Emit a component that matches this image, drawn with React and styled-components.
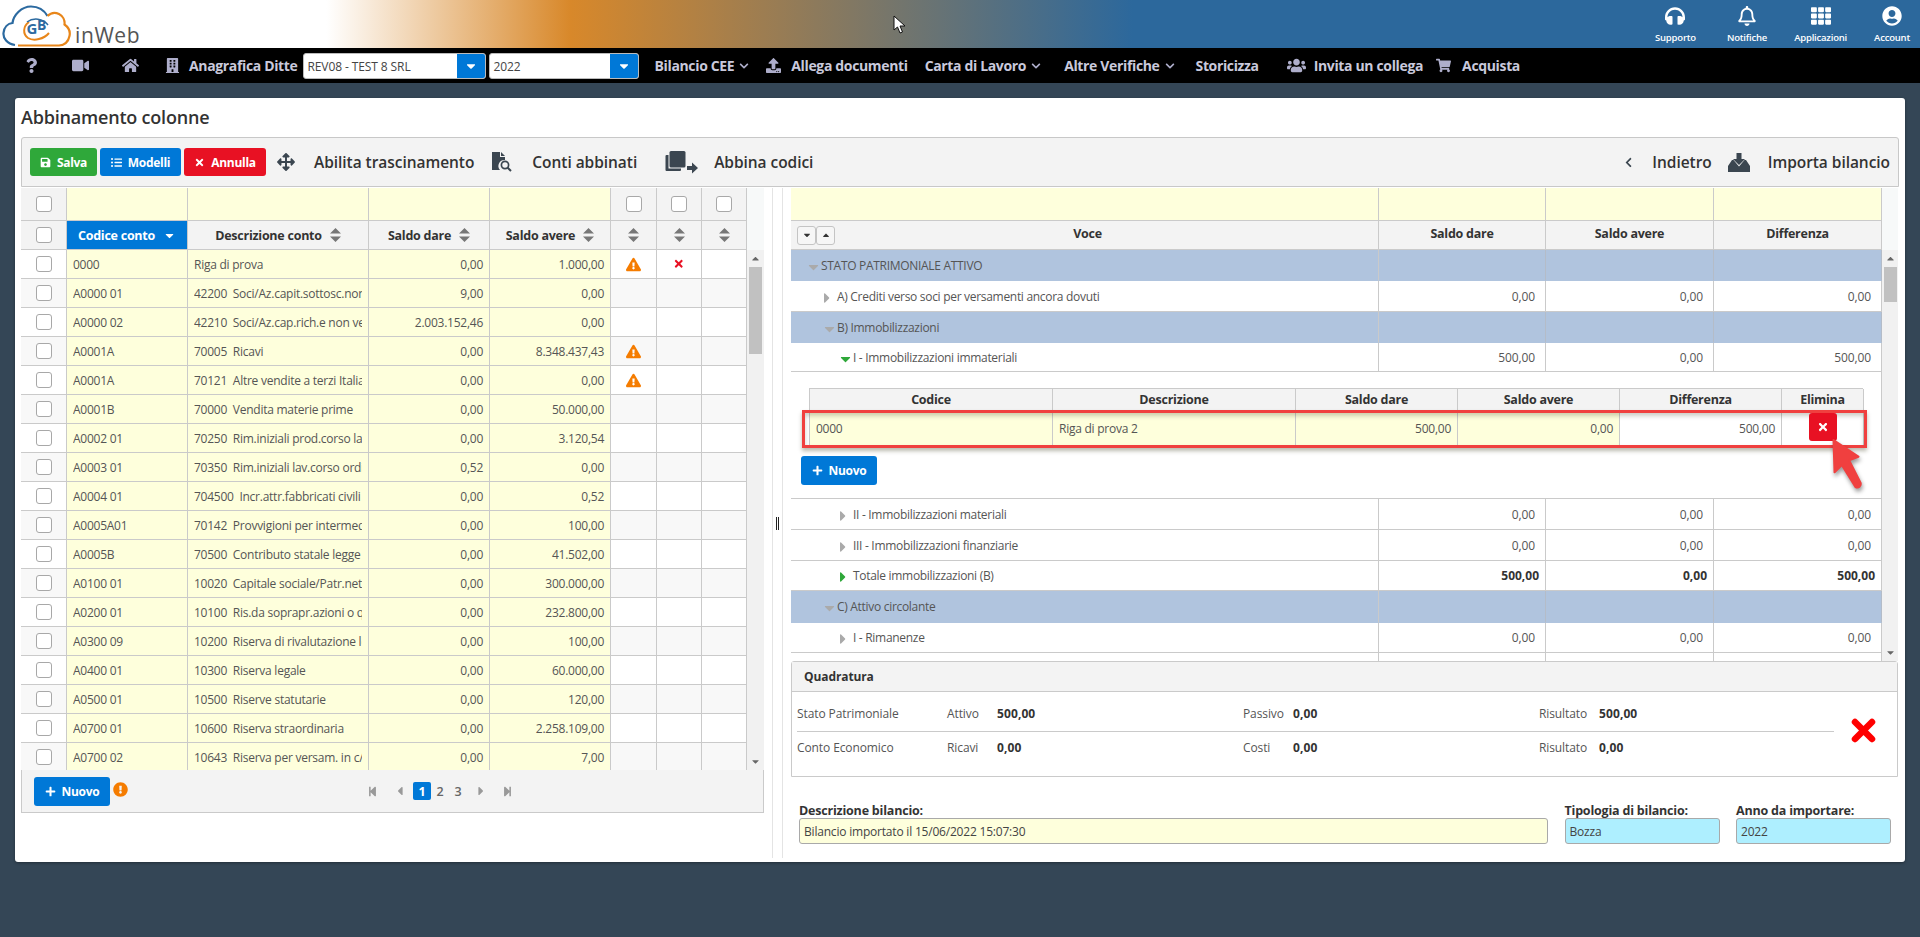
import React from "react";
import styled, { createGlobalStyle } from "styled-components";
import {
  FaHeadphones, FaRegBell, FaTh, FaUserCircle, FaQuestion, FaVideo, FaHome, FaBuilding, FaChevronDown,
  FaUpload, FaUsers, FaShoppingCart, FaSave, FaListUl, FaTimes, FaArrowsAlt, FaChevronLeft, FaPlus,
  FaExclamationTriangle, FaStepBackward, FaStepForward, FaCaretLeft, FaCaretRight, FaCaretDown, FaCaretUp, FaExclamationCircle,
} from "react-icons/fa";

const Global = createGlobalStyle`
  html, body { margin: 0; padding: 0; background: #344656; }
  body { font-family: "Open Sans", "Noto Sans", sans-serif; font-size: 12px; color: #444; }
  * { box-sizing: border-box; }
`;

const Page = styled.div`width:1920px;height:937px;overflow:hidden;display:flex;flex-direction:column;position:relative;background:#344656;`;
const TopBar = styled.header`
  height:48px;flex:none;display:flex;align-items:stretch;justify-content:space-between;
  background:linear-gradient(90deg,#fff 17%,#d8882a 29.7%,#2c689c 59%);
`;
const LogoWrap = styled.div`display:flex;align-items:flex-end;padding:3px 0 0 2px;`;
const InWeb = styled.span`font-size:21px;line-height:24px;color:#555;margin:0 0 0 3px;letter-spacing:.6px;font-family:"Open Sans",sans-serif;padding-bottom:1px;`;
const HeaderActions = styled.div`display:flex;gap:27px;padding-right:10px;`;
const HeaderAction = styled.div`display:flex;flex-direction:column;align-items:center;justify-content:flex-start;color:#fff;padding-top:6px;margin-left:${p => p.$ml ?? 0}px;
  svg{font-size:20px;display:block;height:20px;}
`;
const HeaderLabel = styled.span`font-size:9.5px;font-weight:600;line-height:12px;margin-top:6px;color:#fff;letter-spacing:-.2px;`;

const NavBar = styled.nav`height:35px;flex:none;background:#000;display:flex;align-items:center;padding-left:24px;color:#c9c9dc;`;
const NavItem = styled.div`
  display:flex;align-items:center;gap:${p => p.$gap ?? 0}px;margin-left:${p => p.$ml ?? 0}px;font-size:14px;font-weight:700;white-space:nowrap;letter-spacing:-.35px;
  svg{color:#aeaecb;flex:none;}
`;
const SelectBox = styled.div`width:${p => p.$w}px;height:26px;margin-left:${p => p.$ml}px;display:flex;background:#fff;border:1px solid #bbb;border-radius:3px;overflow:hidden;`;
const SelectText = styled.div`flex:1;font-size:12px;line-height:25px;padding-left:4px;color:#444;white-space:nowrap;overflow:hidden;letter-spacing:-.1px;`;
const SelectBtn = styled.div`width:28px;background:#0078d7;color:#fff;display:flex;align-items:center;justify-content:center;font-size:14px;`;

const Main = styled.main`flex:1;padding:15px 15px 0;`;
const Card = styled.section`height:764px;background:#fff;border-radius:3px;padding:0 6px;box-shadow:0 1px 3px rgba(0,0,0,.35);display:flex;flex-direction:column;`;
const Title = styled.h1`height:39px;margin:0;font-size:18px;font-weight:600;line-height:38px;color:#333;letter-spacing:-.2px;flex:none;`;
const Toolbar = styled.div`height:50px;flex:none;background:#f3f3f3;border:1px solid #c8c8c8;border-radius:3px 3px 0 0;display:flex;align-items:center;padding-left:8px;padding-right:8px;`;
const ColorBtn = styled.button`
  height:${p => p.$h ?? 28}px;width:${p => p.$w}px;margin-left:${p => p.$ml ?? 0}px;border:0;border-radius:3px;background:${p => p.$bg};color:#fff;
  font:700 12px "Open Sans",sans-serif;letter-spacing:-.3px;display:inline-flex;align-items:center;justify-content:center;gap:6px;padding:0;flex:none;
`;
const ToolLink = styled.div`display:flex;align-items:center;gap:${p => p.$gap}px;margin-left:${p => p.$ml}px;font-size:15.5px;font-weight:600;color:#333;letter-spacing:-.05px;white-space:nowrap;svg{flex:none;}`;
const Spacer = styled.div`flex:1;`;

const Panes = styled.div`flex:none;height:670px;display:flex;margin-top:1px;`;
const LeftPane = styled.div`width:751px;flex:none;`;
const Splitter = styled.div`width:11px;flex:none;border-left:1px solid #e4e4e4;border-right:1px solid #e4e4e4;display:flex;align-items:center;justify-content:center;gap:1px;`;
const SplitLine = styled.span`width:1px;height:13px;background:#222;`;
const RightPane = styled.div`flex:1;padding-left:8px;min-width:0;`;

const LeftCols = "46px 121px 181px 121px 121px 46px 45px 45px";
const TableShell = styled.div`display:flex;width:${p => p.$w}px;`;
const TableCol = styled.div`width:${p => p.$w}px;flex:none;`;
const LeftRow = styled.div`display:grid;grid-template-columns:${LeftCols};height:${p => p.$h ?? 29}px;`;
const Cell = styled.div`
  border-right:1px solid #cacaca;border-bottom:1px solid #cacaca;background:${p => p.$bg ?? "#fff"};display:flex;align-items:center;
  justify-content:${p => p.$j ?? "flex-start"};padding:0 6px;font-size:12px;color:#555;min-width:0;letter-spacing:-.25px;
`;
const HeadCell = styled(Cell)`background:${p => p.$bg ?? "#f3f3f3"};justify-content:center;font-weight:700;color:${p => p.$c ?? "#333"};gap:8px;font-size:12.5px;white-space:nowrap;`;
const RightHead = styled(HeadCell)`padding-bottom:3px;`;
const Clip = styled.div`overflow:hidden;white-space:pre;width:100%;`;
const Check = styled.input.attrs({ type: "checkbox", readOnly: true })`appearance:none;margin:0;width:16px;height:16px;border:1px solid #a8a8a8;border-radius:3px;background:#fff;`;
const Warn = styled(FaExclamationTriangle)`color:#f57c00;font-size:15px;`;
const SmallX = styled(FaTimes)`color:#e81123;font-size:11.5px;`;

const ScrollTrack = styled.div`width:${p => p.$w ?? 17}px;flex:none;display:flex;flex-direction:column;align-items:center;`;
const ScrollHead = styled.div`height:62px;width:100%;background:#f7f9f9;flex:none;`;
const ScrollBody = styled.div`flex:1;width:100%;background:#f1f1f1;display:flex;flex-direction:column;align-items:center;min-height:0;`;
const ScrollArrow = styled.div`height:17px;flex:none;color:#666;font-size:11px;display:flex;align-items:center;justify-content:center;`;
const ScrollThumb = styled.div`width:13px;height:${p => p.$h}px;background:#c1c1c1;flex:none;`;
const RowsClip = styled.div`height:${p => p.$h}px;overflow:hidden;`;

const Footer = styled.div`width:743px;height:43px;background:#f3f3f3;border:1px solid #cacaca;border-top:0;display:flex;align-items:center;padding-left:12px;`;
const InfoDot = styled(FaExclamationCircle)`color:#f57c00;font-size:15px;margin-left:3px;margin-top:-3px;`;
const Pager = styled.div`display:flex;align-items:center;margin-left:231px;color:#999;font-size:14px;`;
const PageIcon = styled.span`width:${p => p.$w ?? 27}px;display:flex;justify-content:center;font-size:${p => p.$s ?? 11}px;`;
const PageNum = styled.span`width:18px;height:18px;border-radius:2px;display:flex;align-items:center;justify-content:center;font-weight:${p => p.$on ? 700 : 600};font-size:12.5px;background:${p => p.$on ? "#0078d7" : "transparent"};color:${p => p.$on ? "#fff" : "#666"};`;

const RightCols = "588px 167px 168px 168px";
const RightRow = styled.div`display:grid;grid-template-columns:${RightCols};height:${p => p.$h}px;`;
const TreeCell = styled(Cell)`background:${p => p.$bg ?? "#fff"};padding:0 0 0 ${p => p.$level * 16 + 15}px;letter-spacing:-.3px;border-bottom-color:${p => p.$blue ? "#b0c4de" : "#cacaca"};`;
const NumCell = styled(Cell)`justify-content:flex-end;padding-right:${p => p.$bold ? 6 : 10}px;font-weight:${p => p.$bold ? 700 : 400};color:${p => p.$bold ? "#333" : "#555"};background:${p => p.$bg ?? "#fff"};letter-spacing:${p => p.$bold ? 0 : -.1}px;border-bottom-color:${p => p.$blue ? "#b0c4de" : "#cacaca"};border-right-color:${p => p.$blue ? "#b4bcc8" : "#cacaca"};`;
const Arrow = styled.span`width:15px;flex:none;display:flex;justify-content:${p => p.$open ? "flex-start" : "center"};padding-right:${p => p.$open ? 0 : 5}px;color:${p => p.$c ?? "#aaa"};font-size:16px;margin-top:3px;`;
const VoceHead = styled(RightHead)`justify-content:space-between;padding:0 0 0 6px;`;
const VoceLabel = styled.span`flex:1;text-align:center;padding:0 46px 3px 0;`;
const ToggleGroup = styled.div`display:flex;`;
const Toggle = styled.span`width:19px;height:19px;background:#f6f6f6;border:1px solid #c4c4c4;border-radius:3px;color:#333;font-size:10px;display:flex;align-items:center;justify-content:center;`;

const DetailArea = styled.div`height:127px;border-bottom:1px solid #cacaca;border-right:1px solid #cacaca;width:1091px;padding:16px 0 0 10px;`;
const DetailTable = styled.div`margin-left:8px;width:1054px;position:relative;`;
const DetailCols = "243px 243px 162px 162px 162px 82px";
const DetailHead = styled.div`display:grid;grid-template-columns:${DetailCols};height:23px;border-top:1px solid #cacaca;border-left:1px solid #cacaca;`;
const DetailRow = styled.div`display:grid;grid-template-columns:${DetailCols};height:36px;border-left:1px solid #cacaca;`;
const Annotation = styled.div`position:absolute;left:-7px;right:-4px;top:22px;height:38px;border:3px solid #f0403f;box-shadow:0 3px 4px rgba(60,60,30,.35),inset 0 3px 4px rgba(60,60,30,.25);pointer-events:none;`;
const DelBtn = styled.button`width:28px;height:28px;border:0;border-radius:3px;background:#e81123;color:#fff;display:flex;align-items:center;justify-content:center;font-size:12px;padding:0;margin-top:-3px;position:relative;z-index:1;`;
const BigNuovo = styled(ColorBtn)`margin-top:9px;`;
const PointerWrap = styled.div`position:absolute;left:1827px;top:437px;z-index:3;filter:drop-shadow(1px 3px 2px rgba(0,0,0,.4));`;
const CursorWrap = styled.div`position:absolute;left:893px;top:15px;z-index:3;`;

const Quad = styled.div`height:116px;width:1107px;border:1px solid #cacaca;border-radius:3px 3px 0 0;background:#fff;`;
const QuadHead = styled.div`height:30px;background:#f3f3f3;border-bottom:1px solid #cacaca;font-weight:700;font-size:12px;color:#333;display:flex;align-items:center;padding-left:12px;letter-spacing:-.1px;`;
const QuadBody = styled.div`display:flex;`;
const QuadRows = styled.div`width:1042px;padding:3px 0 0 5px;flex:none;`;
const QuadRow = styled.div`display:grid;grid-template-columns:150px 50px 246px 50px 246px 60px 1fr;align-items:center;height:${p => p.$h}px;border-bottom:${p => p.$line ? "1px solid #cacaca" : "0"};font-size:12px;color:#555;letter-spacing:-.1px;`;
const QuadVal = styled.b`font-weight:700;color:#333;letter-spacing:.1px;`;
const QuadMark = styled.div`flex:1;display:flex;align-items:center;justify-content:center;padding:6px 5px 0 0;`;

const Form = styled.div`display:grid;grid-template-columns:749px 155px 155px;column-gap:16.5px;padding:26px 0 0 8px;`;
const FieldWrap = styled.label`display:flex;flex-direction:column;font-size:12.5px;font-weight:700;color:#333;line-height:15px;letter-spacing:-.2px;`;
const Field = styled.input.attrs({ readOnly: true })`height:26px;margin-top:0;border:1px solid #a9a9a9;border-radius:3px;padding:0 4px;font:400 12px "Open Sans",sans-serif;color:#444;background:${p => p.$bg};letter-spacing:-.2px;width:100%;`;

const yellow = "#feffdc";
const blue = "#b0c4de";
const rows = [
  ["0000", "Riga di prova", "0,00", "1.000,00", 1, 1],
  ["A0000 01", "42200  Soci/Az.capit.sottosc.non richiamato", "9,00", "0,00"],
  ["A0000 02", "42210  Soci/Az.cap.rich.e non versato", "2.003.152,46", "0,00"],
  ["A0001A", "70005  Ricavi", "0,00", "8.348.437,43", 1],
  ["A0001A", "70121  Altre vendite a terzi Italia", "0,00", "0,00", 1],
  ["A0001B", "70000  Vendita materie prime", "0,00", "50.000,00"],
  ["A0002 01", "70250  Rim.iniziali prod.corso lav", "0,00", "3.120,54"],
  ["A0003 01", "70350  Rim.iniziali lav.corso ordinazione", "0,52", "0,00"],
  ["A0004 01", "704500  Incr.attr.fabbricati civili", "0,00", "0,52"],
  ["A0005A01", "70142  Provvigioni per intermediazione", "0,00", "100,00"],
  ["A0005B", "70500  Contributo statale legge 123", "0,00", "41.502,00"],
  ["A0100 01", "10020  Capitale sociale/Patr.netto", "0,00", "300.000,00"],
  ["A0200 01", "10100  Ris.da soprapr.azioni o quote", "0,00", "232.800,00"],
  ["A0300 09", "10200  Riserva di rivalutazione legge", "0,00", "100,00"],
  ["A0400 01", "10300  Riserva legale", "0,00", "60.000,00"],
  ["A0500 01", "10500  Riserve statutarie", "0,00", "120,00"],
  ["A0700 01", "10600  Riserva straordinaria", "0,00", "2.258.109,00"],
  ["A0700 02", "10643  Riserva per versam. in c/capitale", "0,00", "7,00"],
];

const Logo = () => (
  <svg width="70" height="44" viewBox="0 0 70 44" fill="none">
    <path d="M13 41 C5 40 1 34 1.500 29 C2 23 6 19.500 10.500 19 C11.500 11 19.500 2.500 29 2.500 C36 2.500 42 6 45.500 12" stroke="#2c6aa0" strokeWidth="2.200" />
    <path d="M45.500 12 C48.500 9 53 8 57 10 C61 12 63 16.500 62.500 20.500 C66 23 68.500 27.500 67.500 32 C66.500 37 63.500 41 57 41.500 L16 41.500" stroke="#e8861a" strokeWidth="2.200" />
    <path d="M27 18 C21 22 20.500 30 26 34 C32 37.500 42 35 47 29" stroke="#e8861a" strokeWidth="2" />
    <path d="M25 18 C31 13.500 41 14 46 21" stroke="#2c6aa0" strokeWidth="1.500" />
    <text x="24.500" y="30" fontSize="15" fontWeight="700" fill="#2c6aa0" fontFamily="Open Sans, sans-serif">G</text>
    <text x="35" y="26" fontSize="14" fontWeight="700" fill="#2c6aa0" fontFamily="Open Sans, sans-serif">B</text>
  </svg>
);
const SortIcon = ({ color = "#777" }) => (
  <svg width="11" height="14" viewBox="0 0 11 14"><path d="M5.500 0 L11 5.500 H0 Z M0 8.500 H11 L5.500 14 Z" fill={color} /></svg>
);
const FileSearch = () => (
  <svg width="24" height="20" viewBox="0 0 24 20">
    <path d="M1 0 H9 V5 H14 V8 A6 6 0 0 0 9 18 H1 Z M10 0 L14 4 H10 Z" fill="#3b4650" />
    <circle cx="14" cy="13" r="3.600" fill="none" stroke="#3b4650" strokeWidth="1.700" />
    <path d="M16.500 15.500 L20 19" stroke="#3b4650" strokeWidth="2" />
  </svg>
);
const CopyArrow = () => (
  <svg width="33" height="23" viewBox="0 0 33 23">
    <path d="M6 0 H19 A1.500 1.500 0 0 1 20.500 1.500 V15 A1.500 1.500 0 0 1 19 16.500 H6 A1.500 1.500 0 0 1 4.500 15 V1.500 A1.500 1.500 0 0 1 6 0 Z" fill="#3b4650" />
    <path d="M1.500 4 H3.500 V17.500 H16 V19 A1 1 0 0 1 15 20 H1.500 A1 1 0 0 1 .5 19 V5 A1 1 0 0 1 1.500 4 Z" fill="#3b4650" />
    <path d="M22 15 H27 V11.500 L33 17 L27 22.500 V19 H22 Z" fill="#3b4650" />
  </svg>
);
const InboxDown = () => (
  <svg width="22" height="19" viewBox="0 0 22 19">
    <path d="M8.500 0 H13.500 V6 H17 L11 12 L5 6 H8.500 Z" fill="#3b4650" />
    <path d="M4 7 H5.500 L11 13.500 L16.500 7 H18 L22 13 V19 H0 V13 Z" fill="#3b4650" />
  </svg>
);
const RedPointer = () => (
  <svg width="40" height="56" viewBox="0 0 38 54">
    <path d="M6 3 L30 19 L21 22.500 L32 44 C33 47 30 50 27 48 L14 27 L7 34 Z" fill="#f0403f" stroke="#f0403f" strokeWidth="2" strokeLinejoin="round" />
  </svg>
);
const MouseCursor = () => (
  <svg width="13" height="19" viewBox="0 0 13 19"><path d="M1 1 V15 L4.500 12 L7 18 L9.500 17 L7 11 H12 Z" fill="#fff" stroke="#111" strokeWidth="1" /></svg>
);
const BigX = () => (
  <svg width="25" height="25" viewBox="0 0 25 25"><path d="M4 4 L21 21 M21 4 L4 21" stroke="#f00" strokeWidth="6.500" strokeLinecap="round" /></svg>
);

const TreeRow = ({ h, level, label, vals, isBlue, arrow, bold, arrowColor }) => {
  const bg = isBlue ? blue : "#fff";
  return (
    <RightRow $h={h}>
      <TreeCell $level={level} $bg={bg} $blue={isBlue}>
        <Arrow $open={arrow === "down"} $c={arrowColor}>{arrow === "down" ? <FaCaretDown /> : <FaCaretRight />}</Arrow>
        {label}
      </TreeCell>
      {(vals || ["", "", ""]).map((v, i) => <NumCell key={i} $bg={bg} $blue={isBlue} $bold={bold}>{v}</NumCell>)}
    </RightRow>
  );
};
const zero = ["0,00", "0,00", "0,00"];

export default function App() {
  return (
    <Page>
      <Global />
      <TopBar>
        <LogoWrap><Logo /><InWeb>inWeb</InWeb></LogoWrap>
        <HeaderActions>
          <HeaderAction><FaHeadphones /><HeaderLabel>Supporto</HeaderLabel></HeaderAction>
          <HeaderAction $ml={4}><FaRegBell /><HeaderLabel>Notifiche</HeaderLabel></HeaderAction>
          <HeaderAction><FaTh /><HeaderLabel>Applicazioni</HeaderLabel></HeaderAction>
          <HeaderAction><FaUserCircle /><HeaderLabel>Account</HeaderLabel></HeaderAction>
        </HeaderActions>
      </TopBar>
      <CursorWrap><MouseCursor /></CursorWrap>
      <NavBar>
        <NavItem><FaQuestion size={15} /></NavItem>
        <NavItem $ml={33}><FaVideo size={17} /></NavItem>
        <NavItem $ml={33}><FaHome size={17} /></NavItem>
        <NavItem $ml={26} $gap={9}><FaBuilding size={15} />Anagrafica Ditte</NavItem>
        <SelectBox $w={183} $ml={5}><SelectText>REV08 - TEST 8 SRL</SelectText><SelectBtn><FaCaretDown /></SelectBtn></SelectBox>
        <SelectBox $w={150} $ml={3}><SelectText>2022</SelectText><SelectBtn><FaCaretDown /></SelectBtn></SelectBox>
        <NavItem $ml={16} $gap={5}>Bilancio CEE<FaChevronDown size={10} /></NavItem>
        <NavItem $ml={17} $gap={10}><FaUpload size={15} />Allega documenti</NavItem>
        <NavItem $ml={17} $gap={5}>Carta di Lavoro<FaChevronDown size={10} /></NavItem>
        <NavItem $ml={23} $gap={5}>Altre Verifiche<FaChevronDown size={10} /></NavItem>
        <NavItem $ml={21}>Storicizza</NavItem>
        <NavItem $ml={28} $gap={8}><FaUsers size={19} />Invita un collega</NavItem>
        <NavItem $ml={13} $gap={11}><FaShoppingCart size={15} />Acquista</NavItem>
      </NavBar>
      <PointerWrap><RedPointer /></PointerWrap>
      <Main>
        <Card>
          <Title>Abbinamento colonne</Title>
          <Toolbar>
            <ColorBtn $bg="#2fa83a" $w={67}><FaSave size={11} />Salva</ColorBtn>
            <ColorBtn $bg="#0078d7" $w={81} $ml={3}><FaListUl size={11} />Modelli</ColorBtn>
            <ColorBtn $bg="#e81123" $w={82} $ml={3}><FaTimes size={11} />Annulla</ColorBtn>
            <ToolLink $ml={11} $gap={19}><FaArrowsAlt size={18} color="#3b4650" />Abilita trascinamento</ToolLink>
            <ToolLink $ml={17} $gap={17}><FileSearch />Conti abbinati</ToolLink>
            <ToolLink $ml={28} $gap={16}><CopyArrow />Abbina codici</ToolLink>
            <Spacer />
            <ToolLink $ml={0} $gap={18}><FaChevronLeft size={11} color="#3b4650" />Indietro</ToolLink>
            <ToolLink $ml={16} $gap={18}><InboxDown />Importa bilancio</ToolLink>
          </Toolbar>
          <Panes>
            <LeftPane>
              <TableShell $w={743}>
                <TableCol $w={726}>
                  <LeftRow $h={33}>
                    <HeadCell><Check /></HeadCell>
                    <Cell $bg={yellow} /><Cell $bg={yellow} /><Cell $bg={yellow} /><Cell $bg={yellow} />
                    <HeadCell><Check /></HeadCell><HeadCell><Check /></HeadCell><HeadCell><Check /></HeadCell>
                  </LeftRow>
                  <LeftRow>
                    <HeadCell><Check /></HeadCell>
                    <HeadCell $bg="#0078d7" $c="#fff">Codice conto<FaCaretDown size={13} color="#fff" /></HeadCell>
                    <HeadCell>Descrizione conto<SortIcon /></HeadCell>
                    <HeadCell>Saldo dare<SortIcon /></HeadCell>
                    <HeadCell>Saldo avere<SortIcon /></HeadCell>
                    <HeadCell><SortIcon /></HeadCell><HeadCell><SortIcon /></HeadCell><HeadCell><SortIcon /></HeadCell>
                  </LeftRow>
                  <RowsClip $h={520}>
                    {rows.map((r, i) => {
                      const plain = i % 2 === 0 ? "#fff" : "#f8f8f8";
                      return (
                        <LeftRow key={i}>
                          <Cell $bg={plain} $j="center"><Check /></Cell>
                          <Cell $bg={yellow}><Clip>{r[0]}</Clip></Cell>
                          <Cell $bg={yellow}><Clip>{r[1]}</Clip></Cell>
                          <Cell $bg={yellow} $j="flex-end">{r[2]}</Cell>
                          <Cell $bg={yellow} $j="flex-end">{r[3]}</Cell>
                          <Cell $bg={plain} $j="center">{r[4] ? <Warn /> : null}</Cell>
                          <Cell $bg={plain} $j="center">{r[5] ? <SmallX /> : null}</Cell>
                          <Cell $bg={plain} />
                        </LeftRow>
                      );
                    })}
                  </RowsClip>
                </TableCol>
                <ScrollTrack>
                  <ScrollHead />
                  <ScrollBody>
                    <ScrollArrow><FaCaretUp /></ScrollArrow>
                    <ScrollThumb $h={87} />
                    <Spacer />
                    <ScrollArrow><FaCaretDown /></ScrollArrow>
                  </ScrollBody>
                </ScrollTrack>
              </TableShell>
              <Footer>
                <ColorBtn $bg="#0078d7" $w={76} $h={29}><FaPlus size={11} />Nuovo</ColorBtn>
                <InfoDot />
                <Pager>
                  <PageIcon><FaStepBackward /></PageIcon>
                  <PageIcon $s={14}><FaCaretLeft /></PageIcon>
                  <PageNum $on>1</PageNum><PageNum>2</PageNum><PageNum>3</PageNum>
                  <PageIcon $s={14}><FaCaretRight /></PageIcon>
                  <PageIcon><FaStepForward /></PageIcon>
                </Pager>
              </Footer>
            </LeftPane>
            <Splitter><SplitLine /><SplitLine /></Splitter>
            <RightPane>
              <TableShell $w={1107}>
                <TableCol $w={1091}>
                  <RightRow $h={33}><Cell $bg={yellow} /><Cell $bg={yellow} /><Cell $bg={yellow} /><Cell $bg={yellow} /></RightRow>
                  <RightRow $h={29}>
                    <VoceHead>
                      <ToggleGroup><Toggle><FaCaretDown /></Toggle><Toggle><FaCaretUp /></Toggle></ToggleGroup>
                      <VoceLabel>Voce</VoceLabel>
                    </VoceHead>
                    <RightHead>Saldo dare</RightHead><RightHead>Saldo avere</RightHead><RightHead>Differenza</RightHead>
                  </RightRow>
                  <RowsClip $h={411}>
                    <TreeRow h={31} level={0} label="STATO PATRIMONIALE ATTIVO" isBlue arrow="down" />
                    <TreeRow h={31} level={1} label="A) Crediti verso soci per versamenti ancora dovuti" arrow="right" vals={zero} />
                    <TreeRow h={31} level={1} label="B) Immobilizzazioni" isBlue arrow="down" />
                    <TreeRow h={29} level={2} label="I - Immobilizzazioni immateriali" arrow="down" arrowColor="#2fa83a" vals={["500,00", "0,00", "500,00"]} />
                    <DetailArea>
                      <DetailTable>
                        <DetailHead>
                          <HeadCell>Codice</HeadCell><HeadCell>Descrizione</HeadCell><HeadCell>Saldo dare</HeadCell>
                          <HeadCell>Saldo avere</HeadCell><HeadCell>Differenza</HeadCell><HeadCell>Elimina</HeadCell>
                        </DetailHead>
                        <DetailRow>
                          <Cell $bg={yellow}>0000</Cell><Cell $bg={yellow}>Riga di prova 2</Cell>
                          <Cell $bg={yellow} $j="flex-end">500,00</Cell><Cell $bg={yellow} $j="flex-end">0,00</Cell>
                          <Cell $j="flex-end">500,00</Cell>
                          <Cell $j="center"><DelBtn><FaTimes /></DelBtn></Cell>
                        </DetailRow>
                        <Annotation />
                      </DetailTable>
                      <BigNuovo $bg="#0078d7" $w={76} $h={29}><FaPlus size={11} />Nuovo</BigNuovo>
                    </DetailArea>
                    <TreeRow h={31} level={2} label="II - Immobilizzazioni materiali" arrow="right" vals={zero} />
                    <TreeRow h={31} level={2} label="III - Immobilizzazioni finanziarie" arrow="right" vals={zero} />
                    <TreeRow h={30} level={2} label="Totale immobilizzazioni (B)" arrow="right" arrowColor="#2fa83a" bold vals={["500,00", "0,00", "500,00"]} />
                    <TreeRow h={32} level={1} label="C) Attivo circolante" isBlue arrow="down" />
                    <TreeRow h={30} level={2} label="I - Rimanenze" arrow="right" vals={zero} />
                    <TreeRow h={30} level={2} label="" arrow="right" vals={["", "", ""]} />
                  </RowsClip>
                </TableCol>
                <ScrollTrack $w={16}>
                  <ScrollHead />
                  <ScrollBody>
                    <ScrollArrow><FaCaretUp /></ScrollArrow>
                    <ScrollThumb $h={35} />
                    <Spacer />
                    <ScrollArrow><FaCaretDown /></ScrollArrow>
                  </ScrollBody>
                </ScrollTrack>
              </TableShell>
              <Quad>
                <QuadHead>Quadratura</QuadHead>
                <QuadBody>
                  <QuadRows>
                    <QuadRow $h={37} $line>
                      <span>Stato Patrimoniale</span><span>Attivo</span><QuadVal>500,00</QuadVal><span>Passivo</span><QuadVal>0,00</QuadVal><span>Risultato</span><QuadVal>500,00</QuadVal>
                    </QuadRow>
                    <QuadRow $h={31}>
                      <span>Conto Economico</span><span>Ricavi</span><QuadVal>0,00</QuadVal><span>Costi</span><QuadVal>0,00</QuadVal><span>Risultato</span><QuadVal>0,00</QuadVal>
                    </QuadRow>
                  </QuadRows>
                  <QuadMark><BigX /></QuadMark>
                </QuadBody>
              </Quad>
              <Form>
                <FieldWrap>Descrizione bilancio:<Field $bg={yellow} defaultValue="Bilancio importato il 15/06/2022 15:07:30" /></FieldWrap>
                <FieldWrap>Tipologia di bilancio:<Field $bg="#aeefff" defaultValue="Bozza" /></FieldWrap>
                <FieldWrap>Anno da importare:<Field $bg="#aeefff" defaultValue="2022" /></FieldWrap>
              </Form>
            </RightPane>
          </Panes>
        </Card>
      </Main>
    </Page>
  );
}
